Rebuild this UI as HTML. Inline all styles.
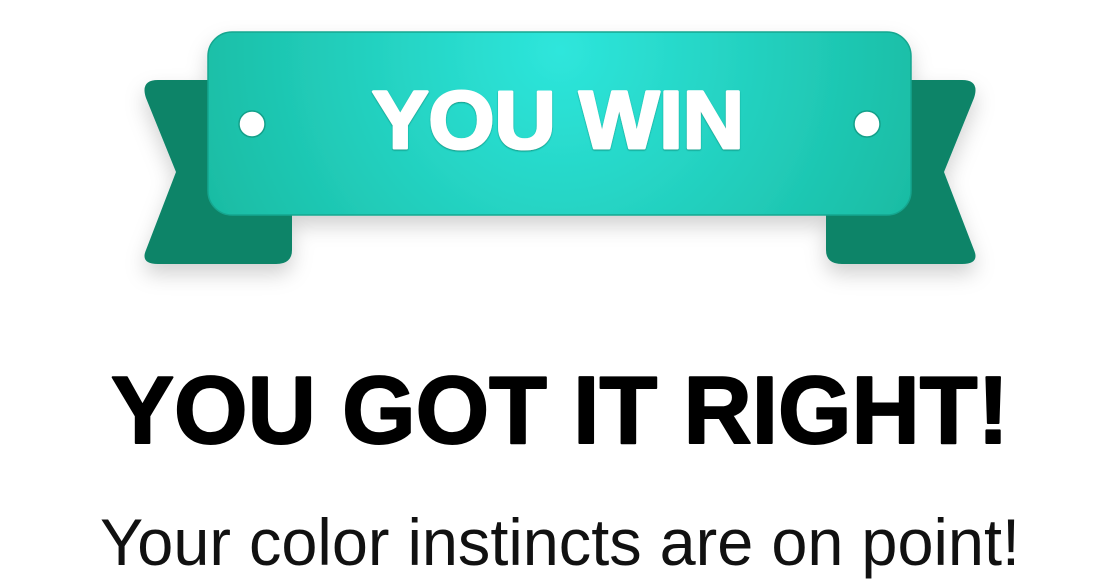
<!DOCTYPE html>
<html><head><style>
html,body{margin:0;padding:0;background:#fff;}
svg{display:block}
</style></head><body>
<svg width="1120" height="584" viewBox="0 0 1120 584" xmlns="http://www.w3.org/2000/svg">
<defs>
<radialGradient id="g" cx="560" cy="50" r="420" gradientUnits="userSpaceOnUse">
<stop offset="0" stop-color="#2ee6dc"/>
<stop offset="1" stop-color="#17b89e"/>
</radialGradient>
<filter id="sh" x="-20%" y="-30%" width="140%" height="170%">
<feDropShadow dx="0" dy="10" stdDeviation="10" flood-color="#000" flood-opacity="0.18"/>
</filter>
<filter id="ts"><feDropShadow dx="0" dy="1" stdDeviation="0.8" flood-color="#0f8f7c" flood-opacity="0.9"/></filter>
</defs>
<g filter="url(#sh)">
<path d="M158 80 H280 Q292 80 292 92 V250 Q292 264 276 264 H158 Q140 264 146 250 L176 172 L146 98 Q140 80 158 80 Z" fill="#0a8468"/>
<path d="M962 80 H840 Q826 80 826 92 V250 Q826 264 842 264 H962 Q980 264 974 250 L944 172 L974 98 Q980 80 962 80 Z" fill="#0a8468"/>
<rect x="208" y="32" width="703" height="183" rx="24" fill="url(#g)" stroke="#16a68f" stroke-width="1.5"/>
</g>
<circle cx="252" cy="124" r="13" fill="#fff" stroke="#14a08a" stroke-width="1.5"/>
<circle cx="867" cy="124" r="13" fill="#fff" stroke="#14a08a" stroke-width="1.5"/>
<text x="558" y="148" text-anchor="middle" font-family="Liberation Sans, sans-serif" font-weight="bold" font-size="82" fill="#fff" stroke="#fff" stroke-width="3" stroke-linejoin="round" filter="url(#ts)" textLength="372" lengthAdjust="spacingAndGlyphs">YOU WIN</text>
<text x="560" y="443" text-anchor="middle" font-family="Liberation Sans, sans-serif" font-weight="bold" font-size="96" fill="#000" stroke="#000" stroke-width="2" stroke-linejoin="round" textLength="898" lengthAdjust="spacingAndGlyphs">YOU GOT IT RIGHT!</text>
<text x="560" y="565" text-anchor="middle" font-family="Liberation Sans, sans-serif" font-size="66" fill="#111" textLength="920" lengthAdjust="spacingAndGlyphs">Your color instincts are on point!</text>
</svg>
</body></html>
